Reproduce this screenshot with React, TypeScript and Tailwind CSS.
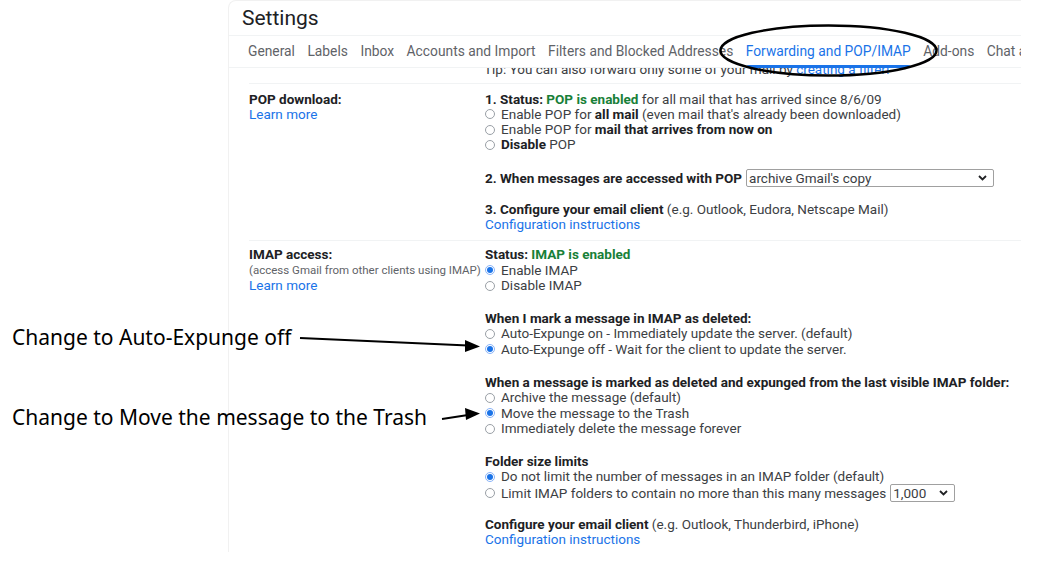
import * as React from "react";

function Radio({ checked = false }: { checked?: boolean }) {
  return (
    <span
      className={`mr-[6px] inline-flex h-[10px] w-[10px] shrink-0 items-center justify-center rounded-full border ${
        checked ? "border-[#8ab4f8]" : "border-[#9aa0a6]"
      }`}
    >
      {checked && <span className="h-[6px] w-[6px] rounded-full bg-[#1a73e8]" />}
    </span>
  );
}

function Option({ checked, children }: { checked?: boolean; children: React.ReactNode }) {
  return (
    <div className="flex items-center whitespace-nowrap">
      <Radio checked={checked} />
      <span>{children}</span>
    </div>
  );
}

function Select({ value, width }: { value: string; width: string }) {
  return (
    <span
      className={`ml-[4px] inline-flex h-[18px] items-center justify-between rounded-[2px] border border-[#a0a0a0] pl-[2px] pr-[6px] align-middle text-[#3c4043] ${width}`}
    >
      <span>{value}</span>
      <svg width="9" height="6" viewBox="0 0 9 6" fill="none">
        <path d="M1 1l3.5 3.5L8 1" stroke="#202124" strokeWidth="1.8" />
      </svg>
    </span>
  );
}

const B = ({ children }: { children: React.ReactNode }) => (
  <b className="font-bold text-[#202124]">{children}</b>
);

export default function App() {
  const tabs = [
    "General",
    "Labels",
    "Inbox",
    "Accounts and Import",
    "Filters and Blocked Addresses",
    "Forwarding and POP/IMAP",
    "Add-ons",
    "Chat and Meet",
  ];

  return (
    <div className="relative h-[562px] w-[1061px] overflow-hidden bg-white font-['Roboto',sans-serif]">
      <div className="ml-[228px] h-[552px] w-[793px] overflow-hidden rounded-tl-[8px] border-l border-t border-[#f1f1f1] bg-white">
        <div className="flex h-[35px] items-center border-b border-[#f1f3f4] pl-[13px] pt-[2px] text-[21px] text-[#202124]">
          Settings
        </div>
        <div className="flex h-[32px] items-stretch gap-[12.5px] whitespace-nowrap border-b border-[#f1f3f4] pl-[19px] text-[13.8px] text-[#5f6368]">
          {tabs.map((t) => (
            <div
              key={t}
              className={`relative flex items-center ${t === "Forwarding and POP/IMAP" ? "text-[#1a73e8]" : ""}`}
            >
              {t}
              {t === "Forwarding and POP/IMAP" && (
                <span className="absolute bottom-[-1px] left-0 right-0 h-[3px] rounded-t-[3px] bg-[#1a73e8]" />
              )}
            </div>
          ))}
        </div>

        <div className="ml-[20px] text-[13.5px] leading-[15.3px] text-[#3c4043]">
          <div className="h-[16px] overflow-hidden border-b border-[#f1f3f4] pl-[235px]">
            <div className="-mt-[6px] whitespace-nowrap">
              Tip: You can also forward only some of your mail by{" "}
              <span className="text-[#1a73e8]">creating a filter!</span>
            </div>
          </div>

          {/* POP download */}
          <div className="flex border-b border-[#f1f3f4] pb-[7.5px] pt-[7.5px]">
            <div className="w-[236px] shrink-0">
              <div className="font-bold text-[#202124]">POP download:</div>
              <div className="text-[#1a73e8]">Learn more</div>
            </div>
            <div className="whitespace-nowrap">
              <div>
                <B>1. Status: </B>
                <b className="font-bold text-[#188038]">POP is enabled</b> for all mail that has arrived since 8/6/09
              </div>
              <Option>
                Enable POP for <B>all mail</B> (even mail that's already been downloaded)
              </Option>
              <Option>
                Enable POP for <B>mail that arrives from now on</B>
              </Option>
              <Option>
                <B>Disable</B> POP
              </Option>
              <div className="mt-[16.5px] flex items-center">
                <B>2. When messages are accessed with POP</B>
                <Select value="archive Gmail's copy" width="w-[248px]" />
              </div>
              <div className="mt-[14.5px]">
                <B>3. Configure your email client</B> (e.g. Outlook, Eudora, Netscape Mail)
              </div>
              <div className="text-[#1a73e8]">Configuration instructions</div>
            </div>
          </div>

          {/* IMAP access */}
          <div className="flex pt-[6.5px]">
            <div className="w-[236px] shrink-0">
              <div className="font-bold text-[#202124]">IMAP access:</div>
              <div className="whitespace-nowrap text-[11.5px] text-[#5f6368]">
                (access Gmail from other clients using IMAP)
              </div>
              <div className="text-[#1a73e8]">Learn more</div>
            </div>
            <div className="whitespace-nowrap">
              <div>
                <B>Status: </B>
                <b className="font-bold text-[#188038]">IMAP is enabled</b>
              </div>
              <Option checked>Enable IMAP</Option>
              <Option>Disable IMAP</Option>

              <div className="mt-[18px]">
                <B>When I mark a message in IMAP as deleted:</B>
              </div>
              <Option>Auto-Expunge on - Immediately update the server. (default)</Option>
              <Option checked>Auto-Expunge off - Wait for the client to update the server.</Option>

              <div className="mt-[18px]">
                <B>When a message is marked as deleted and expunged from the last visible IMAP folder:</B>
              </div>
              <Option>Archive the message (default)</Option>
              <Option checked>Move the message to the Trash</Option>
              <Option>Immediately delete the message forever</Option>

              <div className="mt-[17.5px]">
                <B>Folder size limits</B>
              </div>
              <Option checked>Do not limit the number of messages in an IMAP folder (default)</Option>
              <div className="flex h-[18px] items-center">
                <Radio />
                <span>Limit IMAP folders to contain no more than this many messages</span>
                <Select value="1,000" width="w-[65px]" />
              </div>

              <div className="mt-[14.5px]">
                <B>Configure your email client</B> (e.g. Outlook, Thunderbird, iPhone)
              </div>
              <div className="text-[#1a73e8]">Configuration instructions</div>
            </div>
          </div>
        </div>
      </div>

      {/* annotation: circle around active tab, arrows */}
      <svg className="pointer-events-none absolute left-0 top-0" width="1061" height="562">
        <ellipse cx="828.5" cy="50.5" rx="108" ry="25" fill="none" stroke="#000" strokeWidth="2.5" />
        <path d="M300 338 L468 345.5" stroke="#000" strokeWidth="2" />
        <path d="M480 346.5 L465 340 L465 352 Z" fill="#000" />
        <path d="M442 419 L468 415" stroke="#000" strokeWidth="2" />
        <path d="M480 413.5 L465 408 L466 420 Z" fill="#000" />
      </svg>

      <div className="absolute left-[12px] top-[323px] whitespace-nowrap font-['Noto_Sans',sans-serif] text-[21px] leading-[29px] text-black">
        Change to Auto-Expunge off
      </div>
      <div className="absolute left-[12px] top-[403px] whitespace-nowrap font-['Noto_Sans',sans-serif] text-[21px] leading-[29px] text-black">
        Change to Move the message to the Trash
      </div>
    </div>
  );
}
